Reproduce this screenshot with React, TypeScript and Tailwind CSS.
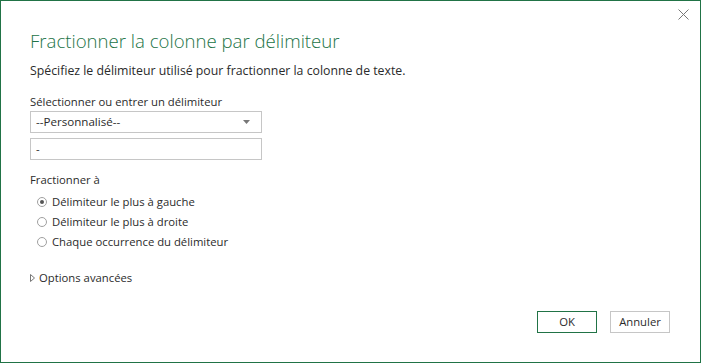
import React from "react";

function Radio({ checked, label }: { checked?: boolean; label: string }) {
  return (
    <label className="flex items-center h-5 gap-[5px]">
      <span className="w-[10px] h-[10px] rounded-full border border-[#a0a0a0] flex items-center justify-center bg-white">
        {checked && <span className="w-[4px] h-[4px] rounded-full bg-[#555]" />}
      </span>
      <span>{label}</span>
    </label>
  );
}

export default function App() {
  return (
    <div
      className="w-[701px] h-[363px] bg-white border border-[#217346] flex flex-col text-[#2b2b2b] text-[11.3px]"
      style={{ fontFamily: '"Open Sans", "Noto Sans", sans-serif' }}
    >
      {/* Close button row */}
      <div className="flex justify-end pr-[11px] pt-[8px] h-[20px]">
        <svg width="11" height="11" viewBox="0 0 11 11" className="text-[#777]">
          <path d="M0.5 0.5 L10.5 10.5 M10.5 0.5 L0.5 10.5" stroke="currentColor" strokeWidth="1" />
        </svg>
      </div>

      <div className="flex flex-col pl-[29px] flex-1">
        <h1 className="text-[18.6px] font-light text-[#217346] leading-[24px] mt-[8px]">
          Fractionner la colonne par délimiteur
        </h1>
        <p className="text-[12.3px] leading-[18px] mt-[9px]">
          Spécifiez le délimiteur utilisé pour fractionner la colonne de texte.
        </p>

        <div className="mt-[14px] leading-[16px]">Sélectionner ou entrer un délimiteur</div>
        <div className="mt-[1px] w-[232px] h-[22px] border border-[#c6c6c6] flex items-center justify-between pl-[5px] pr-[11px]">
          <span className="text-[11.6px]">--Personnalisé--</span>
          <svg width="7" height="4" viewBox="0 0 7 4">
            <path d="M0 0 H7 L3.5 4 Z" fill="#777" />
          </svg>
        </div>
        <div className="mt-[5px] w-[232px] h-[22px] border border-[#c6c6c6] flex items-center pl-[5px]">
          <span>-</span>
        </div>

        <div className="mt-[12px] leading-[16px]">Fractionner à</div>
        <div className="flex flex-col pl-[7px] mt-[4px]">
          <Radio checked label="Délimiteur le plus à gauche" />
          <Radio label="Délimiteur le plus à droite" />
          <Radio label="Chaque occurrence du délimiteur" />
        </div>

        <div className="flex items-center gap-[4px] mt-[16px] h-5">
          <svg width="5" height="8" viewBox="0 0 5 8">
            <path d="M0.5 0.5 L4.5 4 L0.5 7.5 Z" fill="none" stroke="#777" strokeWidth="1" />
          </svg>
          <span>Options avancées</span>
        </div>

        <div className="flex justify-end gap-[13px] pr-[30px] mt-auto mb-[29px]">
          <button className="w-[60px] h-[22px] border border-[#217346] text-[11.3px] text-[#2b2b2b]">
            OK
          </button>
          <button className="w-[60px] h-[22px] border border-[#c6c6c6] text-[11.3px] text-[#2b2b2b]">
            Annuler
          </button>
        </div>
      </div>
    </div>
  );
}
